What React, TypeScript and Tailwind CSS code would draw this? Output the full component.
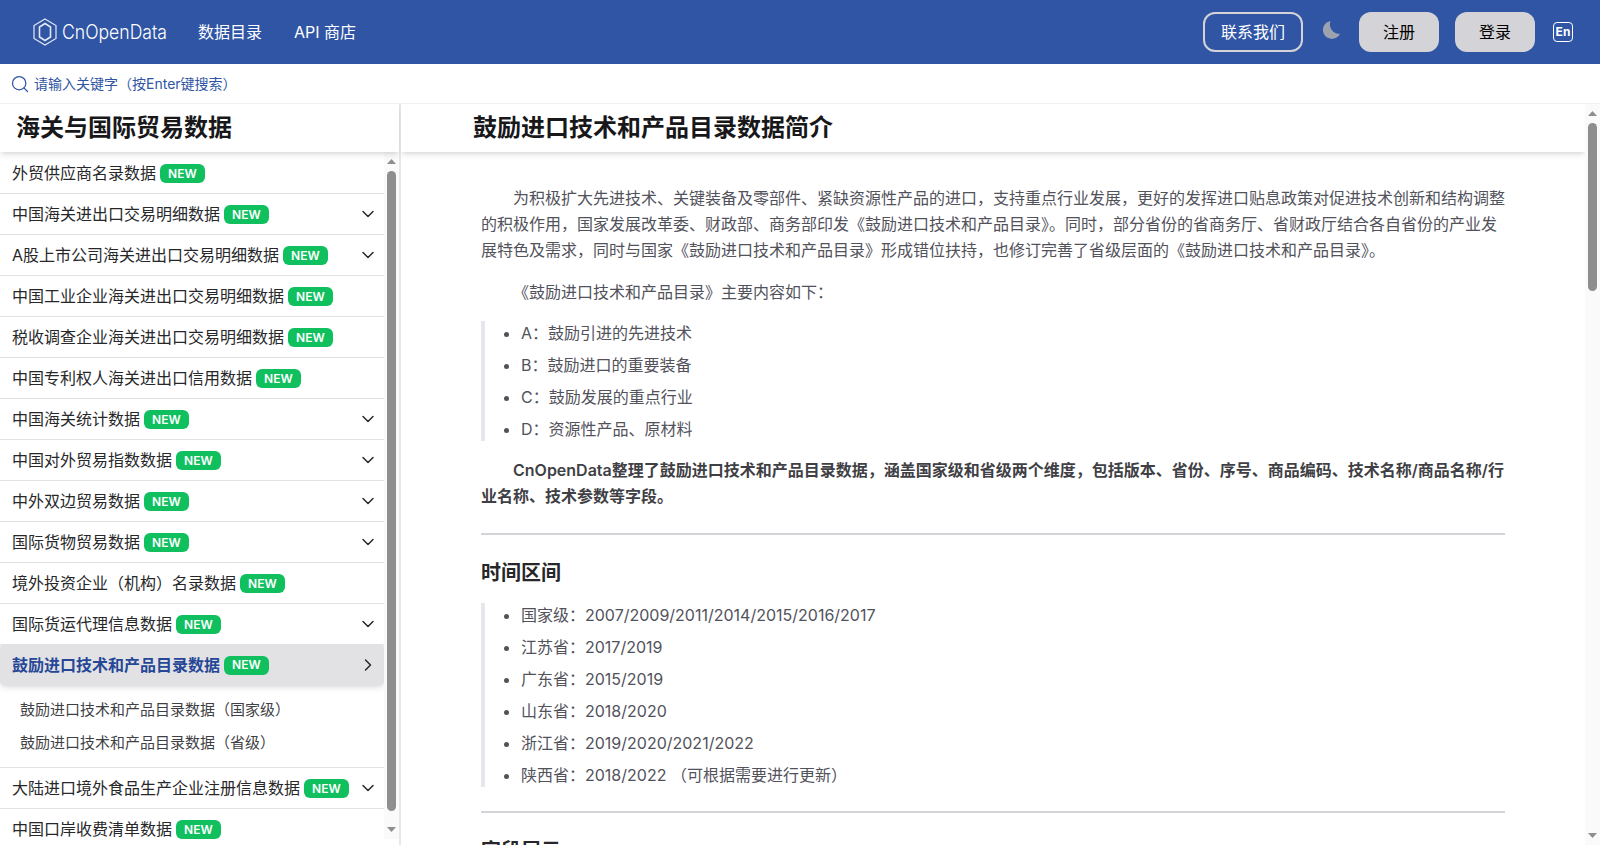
import { Search, ChevronDown, ChevronRight } from "lucide-react";

const items = [
  { name: "外贸供应商名录数据" },
  { name: "中国海关进出口交易明细数据", more: true },
  { name: "A股上市公司海关进出口交易明细数据", more: true },
  { name: "中国工业企业海关进出口交易明细数据" },
  { name: "税收调查企业海关进出口交易明细数据" },
  { name: "中国专利权人海关进出口信用数据" },
  { name: "中国海关统计数据", more: true },
  { name: "中国对外贸易指数数据", more: true },
  { name: "中外双边贸易数据", more: true },
  { name: "国际货物贸易数据", more: true },
  { name: "境外投资企业（机构）名录数据" },
  { name: "国际货运代理信息数据", more: true },
];

const Badge = () => (
  <span className="ml-1 mt-px inline-flex h-[19px] items-center rounded-md bg-[#10c05f] px-2 text-xs font-semibold text-white">NEW</span>
);

const Row = ({ name, more }: { name: string; more?: boolean }) => (
  <div className="flex h-[41px] items-center justify-between border-b border-[#e2e2e5] pl-3 pr-[6px] text-[#27272a]">
    <span className="flex items-center whitespace-nowrap">
      {name}
      <Badge />
    </span>
    {more && <ChevronDown className="h-5 w-5 text-[#27272a]" strokeWidth={1.75} />}
  </div>
);

const Bullets = ({ list }: { list: string[] }) => (
  <ul className="my-4 list-disc space-y-2 border-l-4 border-[#e5e7eb] pl-9 text-[#52525b]">
    {list.map((t) => (
      <li key={t} className="h-6 leading-6 marker:text-[#52525b]">{t}</li>
    ))}
  </ul>
);

// drawn scrollbar, the browser's own doesn't show in the photo
const ScrollBar = ({ thumb }: { thumb: string }) => (
  <div className="flex w-[15px] shrink-0 flex-col items-center bg-[#fafafa]">
    <svg viewBox="0 0 9 5" className="mt-[7px] h-[5px] w-[9px] shrink-0 fill-[#8e8e8e]">
      <path d="M4.5 0 9 5H0z" />
    </svg>
    <div className={thumb} />
    <svg viewBox="0 0 9 5" className="mb-[7px] mt-auto h-[5px] w-[9px] shrink-0 fill-[#8e8e8e]">
      <path d="M0 0h9L4.5 5z" />
    </svg>
  </div>
);

export default function App() {
  return (
    <div className="h-[861px] overflow-hidden bg-white font-['Inter','Noto_Sans_CJK_SC',sans-serif] text-base">
      <header className="flex h-16 items-center justify-between bg-[#2f55a4] pl-[33px] pr-[27px] text-white">
        <div className="flex items-center">
          <svg viewBox="0 0 24 28" className="h-[28px] w-[24px]" fill="none" stroke="#e5e9f3" strokeWidth="1.2">
            <path d="M12 1 23 7.5v13L12 27 1 20.5v-13z" />
            <path d="M12 5.5 17.5 9v10L12 22.5 6.5 19V9z" strokeWidth="1.6" />
          </svg>
          <span className="ml-[5px] w-[136px] origin-left scale-x-[0.88] text-xl font-light">CnOpenData</span>
          <nav className="flex gap-8">
            <span>数据目录</span>
            <span>API 商店</span>
          </nav>
        </div>
        <div className="flex items-center">
          <button className="h-10 w-[100px] rounded-xl border-2 border-[#d4d4d8] text-white">联系我们</button>
          <svg viewBox="0 0 19 18" className="mb-1 ml-[19px] h-[18px] w-[19px] fill-[#9ca3af]">
            <path d="M8.5 0A9 9 0 1 0 18 12.8 9.5 9.5 0 0 1 8.5 0z" />
          </svg>
          <button className="ml-[18px] h-10 w-20 rounded-xl bg-[#d4d4d8] text-black">注册</button>
          <button className="ml-4 h-10 w-20 rounded-xl bg-[#d4d4d8] text-black">登录</button>
          <span className="ml-[18px] flex h-5 w-5 items-center justify-center rounded-sm border border-white text-xs font-bold">En</span>
        </div>
      </header>

      <div className="flex h-10 items-center border-b border-[#f0f0f0] pl-[10px] text-sm text-[#2f55a4]">
        <Search className="h-5 w-5" strokeWidth={1.5} />
        <span className="ml-1">请输入关键字（按Enter键搜索）</span>
      </div>

      <div className="flex h-[741px]">
        <aside className="flex h-full w-[401px] flex-col border-r-2 border-[#e5e7eb]">
          <h2 className="z-10 flex h-[48px] shrink-0 items-center pl-4 text-2xl font-bold text-[#18181b] shadow-md">海关与国际贸易数据</h2>
          <div className="mb-[6px] flex min-h-0 flex-1">
            <div className="min-w-0 flex-1 overflow-hidden pt-px">
              {items.map((i) => (
                <Row key={i.name} name={i.name} more={i.more} />
              ))}
              <div className="-mt-px flex h-[41px] items-center justify-between rounded-sm bg-[#e2e2e5] pl-3 pr-[6px] font-semibold text-[#264796] shadow-md">
                <span className="flex items-center whitespace-nowrap">
                  鼓励进口技术和产品目录数据
                  <Badge />
                </span>
                <ChevronRight className="h-5 w-5 text-[#27272a]" strokeWidth={1.75} />
              </div>
              <div className="border-b border-[#e2e2e5] py-2 pl-5 text-[15px] text-[#3f3f46]">
                <div className="h-[33px] leading-[33px]">鼓励进口技术和产品目录数据（国家级）</div>
                <div className="h-[33px] leading-[33px]">鼓励进口技术和产品目录数据（省级）</div>
              </div>
              <Row name="大陆进口境外食品生产企业注册信息数据" more />
              <Row name="中国口岸收费清单数据" />
            </div>
            <ScrollBar thumb="mt-[7px] h-[640px] w-[9px] shrink-0 rounded-full bg-[#8e8e8e]" />
          </div>
        </aside>

        <main className="flex h-full min-w-0 flex-1">
          <div className="flex min-w-0 flex-1 flex-col overflow-hidden">
            <h1 className="z-10 flex h-[48px] shrink-0 items-center bg-white pl-[72px] text-2xl font-bold text-[#18181b] shadow-md">鼓励进口技术和产品目录数据简介</h1>
            <article className="mx-[80px] pt-[33px] leading-[26px] text-[#52525b]">
              <p className="indent-8">为积极扩大先进技术、关键装备及零部件、紧缺资源性产品的进口，支持重点行业发展，更好的发挥进口贴息政策对促进技术创新和结构调整的积极作用，国家发展改革委、财政部、商务部印发《鼓励进口技术和产品目录》。同时，部分省份的省商务厅、省财政厅结合各自省份的产业发展特色及需求，同时与国家《鼓励进口技术和产品目录》形成错位扶持，也修订完善了省级层面的《鼓励进口技术和产品目录》。</p>
              <p className="mt-4 indent-8">《鼓励进口技术和产品目录》主要内容如下：</p>
              <Bullets list={["A：鼓励引进的先进技术", "B：鼓励进口的重要装备", "C：鼓励发展的重点行业", "D：资源性产品、原材料"]} />
              <p className="indent-8 font-semibold text-[#3f3f46]">CnOpenData整理了鼓励进口技术和产品目录数据，涵盖国家级和省级两个维度，包括版本、省份、序号、商品编码、技术名称/商品名称/行业名称、技术参数等字段。</p>
              <hr className="my-6 border-t-2 border-[#d4d4d8]" />
              <h3 className="text-xl font-semibold leading-7 text-[#27272a]">时间区间</h3>
              <Bullets list={["国家级：2007/2009/2011/2014/2015/2016/2017", "江苏省：2017/2019", "广东省：2015/2019", "山东省：2018/2020", "浙江省：2019/2020/2021/2022", "陕西省：2018/2022 （可根据需要进行更新）"]} />
              <hr className="my-6 border-t-2 border-[#d4d4d8]" />
              <h3 className="text-xl font-semibold leading-7 text-[#27272a]">字段展示</h3>
            </article>
          </div>
          <ScrollBar thumb="mt-[7px] h-[168px] w-[9px] shrink-0 rounded-full bg-[#8e8e8e]" />
        </main>
      </div>
    </div>
  );
}
